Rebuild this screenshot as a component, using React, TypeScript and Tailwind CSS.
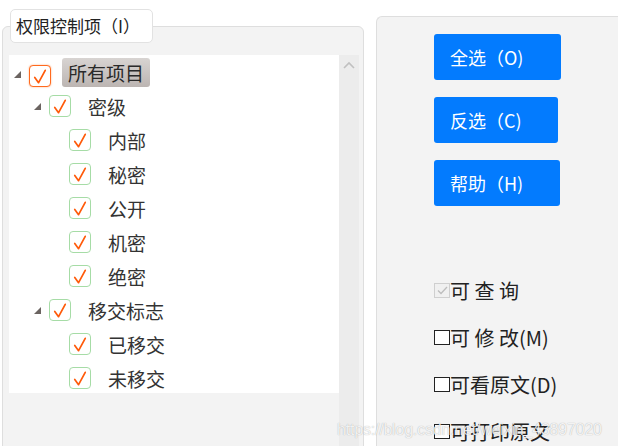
import React from 'react';

type Node = { label: string; depth: number; expander?: boolean; root?: boolean };

const nodes: Node[] = [
  { label: '所有项目', depth: 0, expander: true, root: true },
  { label: '密级', depth: 1, expander: true },
  { label: '内部', depth: 2 },
  { label: '秘密', depth: 2 },
  { label: '公开', depth: 2 },
  { label: '机密', depth: 2 },
  { label: '绝密', depth: 2 },
  { label: '移交标志', depth: 1, expander: true },
  { label: '已移交', depth: 2 },
  { label: '未移交', depth: 2 },
];

const indent = ['pl-[5px]', 'pl-[25px]', 'pl-[45px]'];

function Tick() {
  return (
    <svg width="21" height="21" viewBox="0 0 21 21" className="block">
      <path d="M5 11.5 L9 17 L16 4" fill="none" stroke="#ff5a0a" strokeWidth="1.8" strokeLinecap="round" strokeLinejoin="round" />
    </svg>
  );
}

function TreeCheck({ root }: { root?: boolean }) {
  return (
    <span
      className={
        root
          ? 'mt-[8px] flex h-[22px] w-[22px] items-center justify-center rounded-[4px] border border-[#ff6a1f] bg-white shadow-[0_0_2px_#ffb080]'
          : 'flex h-[22px] w-[22px] items-center justify-center rounded-[4px] border border-[#a6dca6] bg-white'
      }
    >
      <Tick />
    </span>
  );
}

function TreeRow({ node }: { node: Node }) {
  return (
    <div className={`flex h-[34px] items-center ${indent[node.depth]}`}>
      <span className={node.root ? 'mt-[4px] flex w-[15px]' : 'flex w-[15px]'}>
        {node.expander && (
          <svg width="7" height="7" viewBox="0 0 7 7">
            <path d="M7 0 L7 7 L0 7 Z" fill="#6b6461" />
          </svg>
        )}
      </span>
      <TreeCheck root={node.root} />
      {node.root ? (
        <span className="ml-[11px] rounded-[3px] bg-gradient-to-b from-[#d8d4d2] to-[#bcb5b2] px-[6px] py-[1px] text-[19px] leading-[27px] text-[#2a2a2a]">
          {node.label}
        </span>
      ) : (
        <span className="ml-[17px] text-[19px] leading-[27px] text-[#333]">{node.label}</span>
      )}
    </div>
  );
}

function BlueButton({ label, w }: { label: string; w: string }) {
  return (
    <button className={`flex h-[46px] ${w} items-center rounded-[3px] bg-[#037bfe] pl-[16px] text-[18px] text-white`}>
      {label}
    </button>
  );
}

function Option({ label, disabled }: { label: string; disabled?: boolean }) {
  return (
    <div className="flex h-[47px] items-center">
      {disabled ? (
        <span className="flex h-[15px] w-[16px] items-center justify-center border border-[#cfcfcf] bg-[#f0f0f0]">
          <svg width="11" height="9" viewBox="0 0 11 9">
            <path d="M1 4.5 L4 7.5 L10 1" fill="none" stroke="#bdbdbd" strokeWidth="1.3" />
          </svg>
        </span>
      ) : (
        <span className="h-[15px] w-[16px] border border-[#222] bg-white" />
      )}
      <span className="whitespace-pre text-[20px] leading-none text-[#222]">{label}</span>
    </div>
  );
}

export default function App() {
  return (
    <div
      className="relative flex h-[446px] w-[618px] overflow-hidden bg-white"
      style={{ fontFamily: '"Noto Sans CJK SC", "Noto Sans", sans-serif' }}
    >
      {/* left group box */}
      <div className="relative ml-[2px] mt-[26px] flex h-[430px] w-[362px] flex-col rounded-t-[6px] border border-[#dedede] bg-[#f3f3f3] pl-[6px] pt-[28px]">
        <div className="absolute left-[7px] top-[-18px] flex h-[34px] w-[143px] items-center rounded-[5px] border border-[#e2e2e2] bg-white pl-[5px] text-[17px] text-[#222]">
          权限控制项（I）
        </div>
        <div className="flex flex-1">
          <div className="h-[338px] w-[330px] bg-white">
            {nodes.map((n) => (
              <TreeRow key={n.label} node={n} />
            ))}
          </div>
          <div className="flex w-[20px] flex-col items-center justify-between bg-[#ececec] pb-[1px] pt-[6px]">
            <svg width="12" height="8" viewBox="0 0 12 8">
              <path d="M1 7 L6 2 L11 7" fill="none" stroke="#c0c0c0" strokeWidth="1.6" />
            </svg>
            <svg width="12" height="8" viewBox="0 0 12 8">
              <path d="M1 1 L6 6 L11 1" fill="none" stroke="#c0c0c0" strokeWidth="1.6" />
            </svg>
          </div>
        </div>
      </div>

      {/* right group box */}
      <div className="ml-[12px] mt-[16px] flex flex-1 flex-col rounded-tl-[6px] border-l border-t border-[#dedede] bg-[#f3f3f3] pl-[57px] pt-[17px]">
        <div className="flex flex-col gap-[17px]">
          <BlueButton label="全选（O)" w="w-[127px]" />
          <BlueButton label="反选（C)" w="w-[124px]" />
          <BlueButton label="帮助（H)" w="w-[126px]" />
        </div>
        <div className="mt-[61px] flex flex-col">
          <Option label="可 查 询" disabled />
          <Option label="可 修 改(M)" />
          <Option label="可看原文(D)" />
          <Option label="可打印原文" />
        </div>
      </div>

      {/* watermark */}
      <div
        className="pointer-events-none absolute left-[337px] top-[418px] whitespace-nowrap text-[16px] tracking-[-0.2px] text-white/85 [text-shadow:0_0_1px_rgba(0,0,0,0.35)]"
        style={{ fontFamily: '"Liberation Sans", Arial, sans-serif' }}
      >
        https://blog.csdn.net/weixin_43897020
      </div>
    </div>
  );
}
